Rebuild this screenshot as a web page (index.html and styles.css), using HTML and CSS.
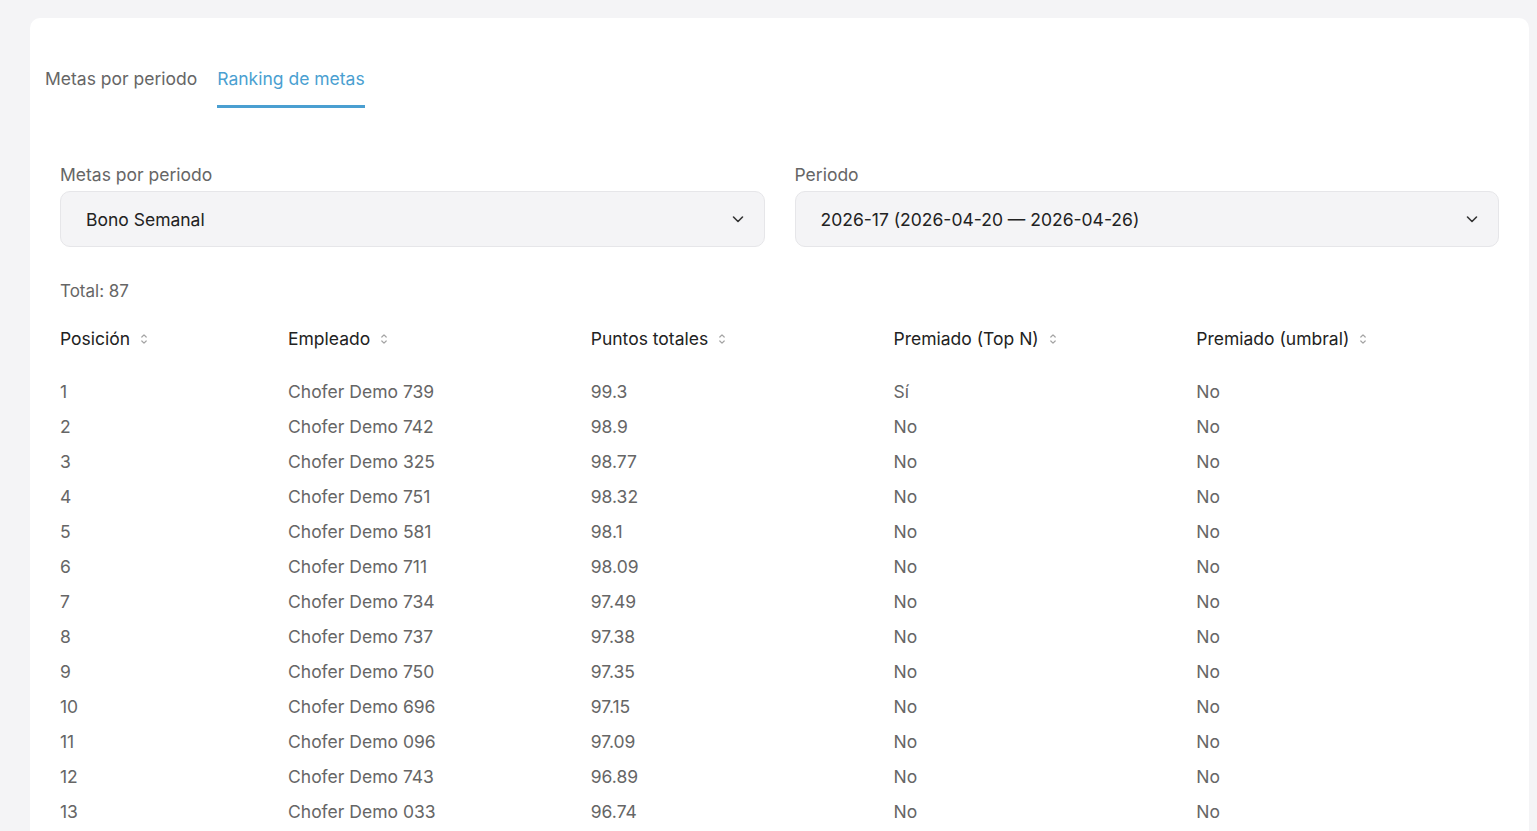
FILE: index.html
```html
<!DOCTYPE html>
<html lang="es">
<head>
  <meta charset="UTF-8" />
  <meta name="viewport" content="width=device-width, initial-scale=1.0" />
  <title>Ranking de metas</title>
  <link rel="stylesheet" href="styles.css">
</head>
<body>
  <div class="card">
    <!-- Tabs -->
    <div class="tabs">
      <div class="tab">Metas por periodo</div>
      <div class="tab active">Ranking de metas</div>
    </div>

    <!-- Filters -->
    <div class="filters">
      <div class="field">
        <div class="label">Metas por periodo</div>
        <div class="select">
          <span>Bono Semanal</span>
          <svg class="chevron" viewBox="0 0 16 16" width="16" height="16"><path d="M3.5 6 8 10.5 12.5 6" fill="none" stroke="#333" stroke-width="1.6" stroke-linecap="round" stroke-linejoin="round"/></svg>
        </div>
      </div>
      <div class="field">
        <div class="label">Periodo</div>
        <div class="select">
          <span>2026-17 (2026-04-20 — 2026-04-26)</span>
          <svg class="chevron" viewBox="0 0 16 16" width="16" height="16"><path d="M3.5 6 8 10.5 12.5 6" fill="none" stroke="#333" stroke-width="1.6" stroke-linecap="round" stroke-linejoin="round"/></svg>
        </div>
      </div>
    </div>

    <div class="total">Total: 87</div>

    <table class="ranking">
      <thead>
        <tr>
          <th class="col-pos">Posición <span class="sort"></span></th>
          <th>Empleado <span class="sort"></span></th>
          <th>Puntos totales <span class="sort"></span></th>
          <th>Premiado (Top N) <span class="sort"></span></th>
          <th>Premiado (umbral) <span class="sort"></span></th>
        </tr>
      </thead>
      <tbody id="rows"></tbody>
    </table>
  </div>

  <script>
    const data = [
      [1, "Chofer Demo 739", "99.3", "Sí", "No"],
      [2, "Chofer Demo 742", "98.9", "No", "No"],
      [3, "Chofer Demo 325", "98.77", "No", "No"],
      [4, "Chofer Demo 751", "98.32", "No", "No"],
      [5, "Chofer Demo 581", "98.1", "No", "No"],
      [6, "Chofer Demo 711", "98.09", "No", "No"],
      [7, "Chofer Demo 734", "97.49", "No", "No"],
      [8, "Chofer Demo 737", "97.38", "No", "No"],
      [9, "Chofer Demo 750", "97.35", "No", "No"],
      [10, "Chofer Demo 696", "97.15", "No", "No"],
      [11, "Chofer Demo 096", "97.09", "No", "No"],
      [12, "Chofer Demo 743", "96.89", "No", "No"],
      [13, "Chofer Demo 033", "96.74", "No", "No"]
    ];

    const sortIcon = '<svg viewBox="0 0 10 16" width="10" height="16"><path d="M2.8 6 5 3.8 7.2 6M2.8 10 5 12.2 7.2 10" fill="none" stroke="#a3a3a3" stroke-width="1.2" stroke-linecap="round" stroke-linejoin="round"/></svg>';
    document.querySelectorAll(".sort").forEach(function (el) {
      el.innerHTML = sortIcon;
    });

    const tbody = document.getElementById("rows");
    data.forEach(function (row) {
      const tr = document.createElement("tr");
      row.forEach(function (cell) {
        const td = document.createElement("td");
        td.textContent = cell;
        tr.appendChild(td);
      });
      tbody.appendChild(tr);
    });
  </script>
</body>
</html>
```

FILE: styles.css
```css
html, body {
  margin: 0;
  padding: 0;
}

body {
  font-family: Inter, "Noto Sans", sans-serif;
  background-color: #f4f4f6;
  color: #222;
  padding: 18px 8px 0 30px;
  height: 831px;
  overflow: hidden;
  box-sizing: border-box;
}

.card {
  background-color: #fff;
  border-radius: 10px;
  padding: 0 30px 0 30px;
  min-height: 900px;
}

.tabs {
  display: flex;
  gap: 20px;
  padding-top: 50px;
  margin-left: -15px;
}

.tab {
  font-size: 17.5px;
  color: #666;
  padding-bottom: 16px;
  border-bottom: 3px solid transparent;
}

.tab.active {
  color: #4a9fd1;
  border-bottom-color: #4a9fd1;
}

.filters {
  display: grid;
  grid-template-columns: 1fr 1fr;
  gap: 30px;
  margin-top: 56px;
}

.label {
  font-size: 17.5px;
  color: #666;
  margin-bottom: 6px;
}

.select {
  display: flex;
  align-items: center;
  justify-content: space-between;
  height: 56px;
  box-sizing: border-box;
  padding: 0 18px 0 25px;
  background-color: #f4f4f6;
  border: 1px solid #e6e6e9;
  border-radius: 10px;
  font-size: 17.5px;
  color: #222;
}

.chevron {
  display: block;
}

.total {
  margin-top: 34px;
  font-size: 17px;
  color: #666;
}

.ranking {
  width: 100%;
  border-collapse: collapse;
  margin-top: 23px;
  table-layout: fixed;
}

.ranking th {
  text-align: left;
  font-weight: normal;
  font-size: 17.5px;
  color: #222;
  height: 28px;
  padding: 0 0 22px 0;
}

.ranking th.col-pos {
  width: 228px;
}

.sort {
  display: inline-block;
  vertical-align: -2px;
  margin-left: 4px;
}

.sort svg {
  display: block;
}

.ranking td {
  font-size: 17.5px;
  color: #666;
  height: 35px;
  padding: 0;
}
```
